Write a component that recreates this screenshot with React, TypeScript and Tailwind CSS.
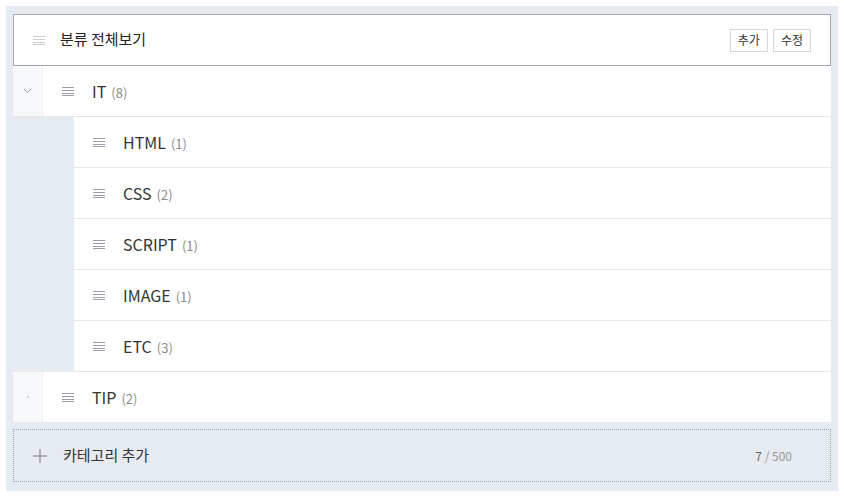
import React from "react";

const font = { fontFamily: '"Noto Sans CJK KR", "Noto Sans", sans-serif' };

interface Item {
  name: string;
  count: number;
}

const children: Item[] = [
  { name: "HTML", count: 1 },
  { name: "CSS", count: 2 },
  { name: "SCRIPT", count: 1 },
  { name: "IMAGE", count: 1 },
  { name: "ETC", count: 3 },
];

const Grip = ({ light }: { light?: boolean }) => (
  <svg width="12" height="10" viewBox="0 0 12 10" className="shrink-0">
    <g stroke={light ? "#c9ccd1" : "#9a9da3"} strokeWidth="1">
      <line x1="0" y1="1.5" x2="12" y2="1.5" />
      <line x1="0" y1="4.5" x2="12" y2="4.5" />
      <line x1="0" y1="7.5" x2="12" y2="7.5" />
      <line x1="0" y1="9.5" x2="12" y2="9.5" />
    </g>
  </svg>
);

const Label = ({ name, count }: Item) => (
  <div className="flex items-baseline">
    <span className="text-[16px] text-[#333]">{name}</span>
    <span className="ml-[5px] text-[13px] text-[#8c8c8c]">({count})</span>
  </div>
);

export default function App() {
  return (
    <div className="min-h-screen bg-white pt-[6px] pl-[6px]" style={font}>
      <div className="w-[832px] bg-[#e6eaf1] pt-[8px] pb-[9px] px-[7px]">
        {/* header */}
        <div className="h-[52px] border border-[#a4a8ae] bg-white flex items-center pl-[19px] pr-[19px]">
          <Grip light />
          <span className="ml-[15px] -mt-[1px] text-[15px] text-[#222]">분류 전체보기</span>
          <div className="ml-auto flex gap-[5px]">
            <button className="h-[23px] px-[7px] border border-[#d5d7db] bg-white text-[12px] text-[#333]">추가</button>
            <button className="h-[23px] px-[7px] border border-[#d5d7db] bg-white text-[12px] text-[#333]">수정</button>
          </div>
        </div>

        {/* IT */}
        <div className="flex h-[51px] border-b border-[#e3e6ea]">
          <div className="w-[30px] bg-[#f7f8fa] border-r border-[#eef0f3] flex items-center justify-center">
            <svg width="9" height="6" viewBox="0 0 9 6">
              <path d="M1 1 L4.5 4.5 L8 1" fill="none" stroke="#9a9da3" strokeWidth="1" />
            </svg>
          </div>
          <div className="flex-1 bg-white flex items-center pl-[19px]">
            <Grip />
            <div className="ml-[18px] -mt-[1px]"><Label name="IT" count={8} /></div>
          </div>
        </div>

        {children.map((c) => (
          <div key={c.name} className="flex h-[51px]">
            <div className="w-[61px]" />
            <div className="flex-1 bg-white border-b border-[#e3e6ea] flex items-center pl-[19px]">
              <Grip />
              <div className="ml-[18px] -mt-[1px]"><Label {...c} /></div>
            </div>
          </div>
        ))}

        {/* TIP */}
        <div className="flex h-[50px]">
          <div className="w-[30px] bg-[#f7f8fa] border-r border-[#eef0f3] flex items-center justify-center">
            <span className="w-[2px] h-[2px] rounded-full bg-[#c4c7cc]" />
          </div>
          <div className="flex-1 bg-white flex items-center pl-[19px]">
            <Grip />
            <div className="ml-[18px] -mt-[1px]"><Label name="TIP" count={2} /></div>
          </div>
        </div>

        {/* add */}
        <div className="mt-[7px] h-[53px] border border-dotted border-[#9ea2a9] flex items-center pl-[19px] pr-[38px]">
          <svg width="14" height="14" viewBox="0 0 14 14">
            <path d="M7 0 V14 M0 7 H14" stroke="#777" strokeWidth="1" />
          </svg>
          <span className="ml-[16px] -mt-[1px] text-[15px] text-[#333]">카테고리 추가</span>
          <span className="ml-auto text-[12px] text-[#666]">
            7 <span className="text-[#999]">/ 500</span>
          </span>
        </div>
      </div>
    </div>
  );
}
